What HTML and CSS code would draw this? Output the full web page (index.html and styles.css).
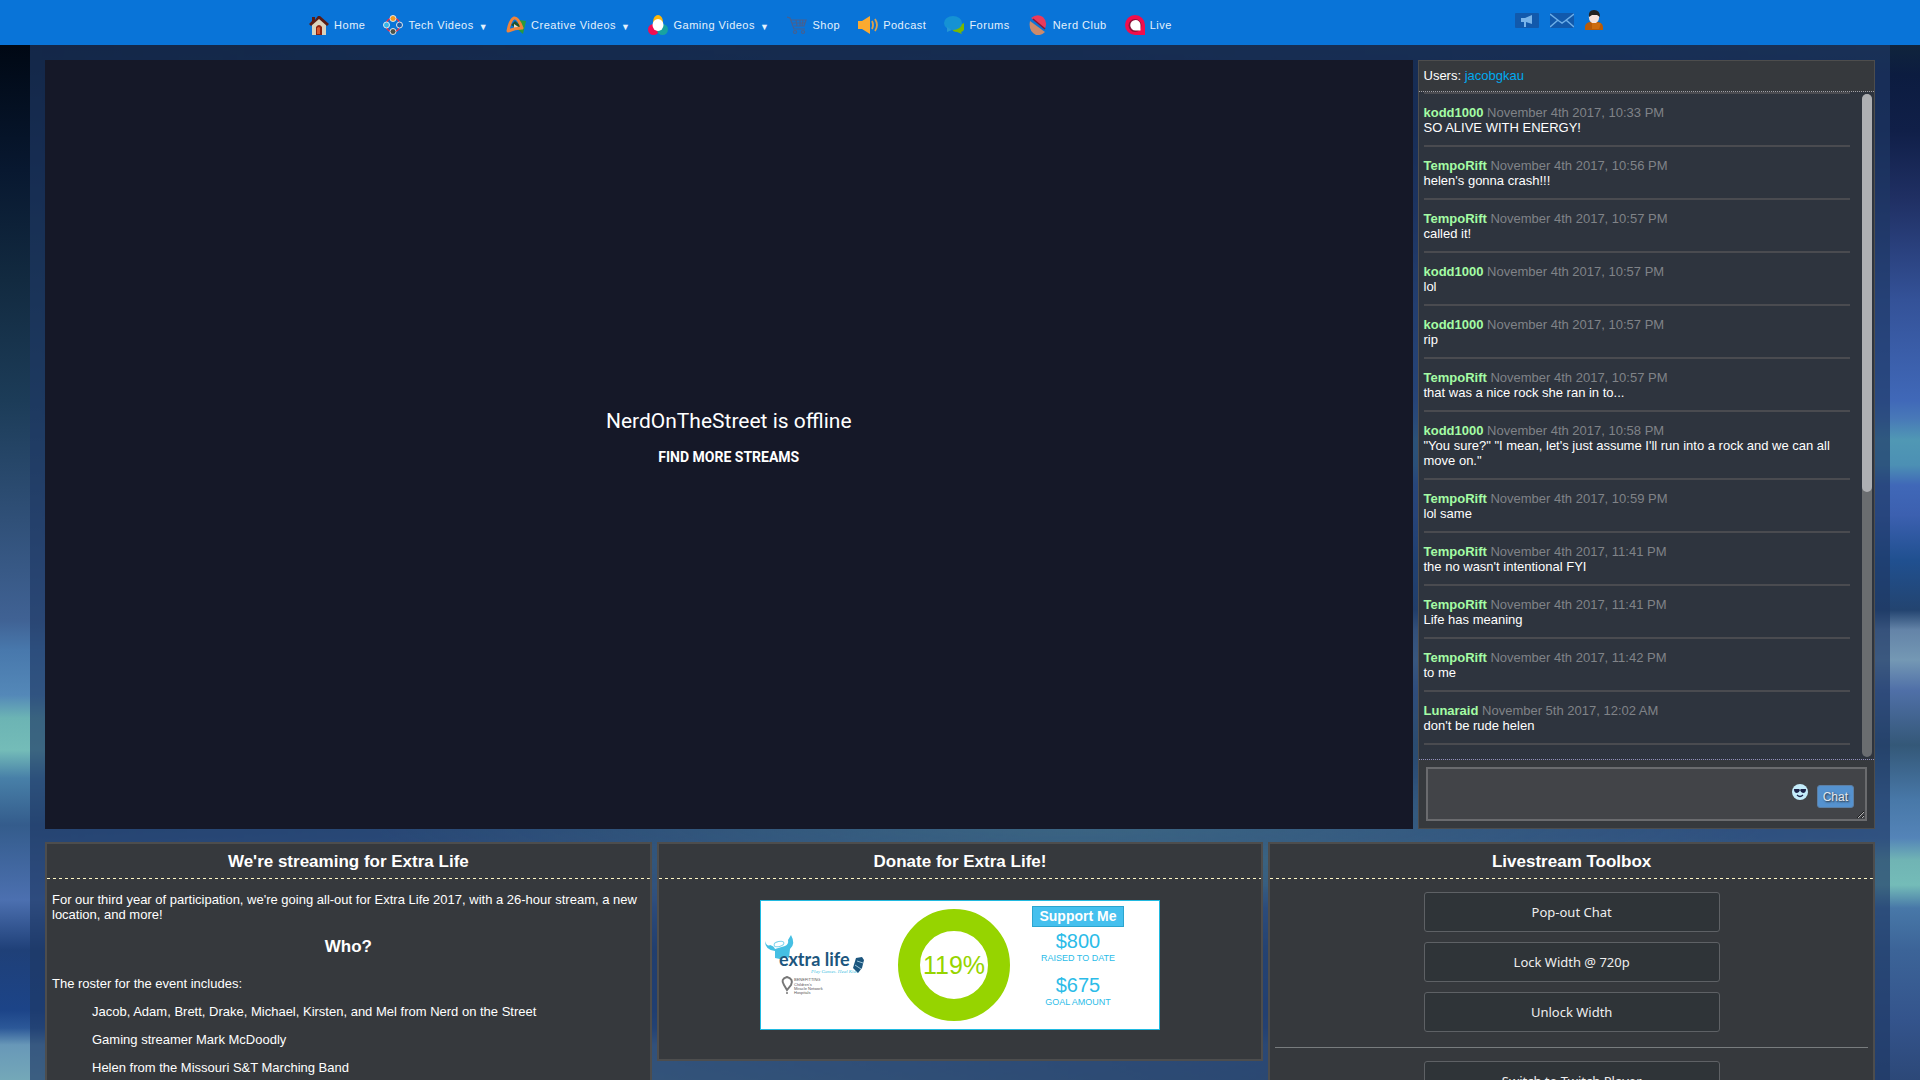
FILE: index.html
```html
<!DOCTYPE html>
<html lang="en">
<head>
<meta charset="utf-8">
<title>NerdOnTheStreet Live</title>
<link rel="stylesheet" href="styles.css">
</head>
<body>
<header class="topbar">
  <nav class="menu" aria-label="Main">
    <a class="menu-item" href="#">
      <svg class="icon" viewBox="0 0 20 20"><path fill="#d9d3bd" d="M3 9l7-7 7 7v11H3z"/><path fill="#5b1c14" d="M3 2h3v3L9 1h2l9 8-2 2-8-7-8 7-2-2 3-3z"/><path fill="#8c2010" d="M7 20v-8q3-4 6 0v8z"/><path fill="#d65a30" d="M8 19v-6q2-2 3 0v6z"/></svg>
      Home</a>
    <a class="menu-item" href="#">
      <svg class="icon" viewBox="0 0 20 20"><circle cx="10" cy="10" r="7" fill="none" stroke="#e2304c" stroke-width="1.5"/><g stroke="#dfe5ea"><circle cx="10" cy="3.500" r="3" fill="#f39a1e"/><circle cx="3.500" cy="10" r="3" fill="#36b5ea"/><circle cx="16.500" cy="10" r="3" fill="#1a5fae"/><circle cx="10" cy="16.500" r="3" fill="#4a5248"/></g></svg>
      Tech Videos <span class="caret">▼</span></a>
    <a class="menu-item" href="#">
      <svg class="icon" viewBox="0 0 20 20"><path fill="#2a9a3c" d="M13 5l7 1-3 13-7-6z"/><path fill="#1d5130" d="M5 10l4-4 6 5-3 3z"/><path fill="#e4ddc8" d="M8 9l6 4-6 2z"/><path d="M2 16q2-11 6-13 4-1 8 10-7 0-14 3z" fill="none" stroke="#f0843c" stroke-width="3" stroke-linejoin="round"/></svg>
      Creative Videos <span class="caret">▼</span></a>
    <a class="menu-item" href="#">
      <svg class="icon" viewBox="0 0 20 20"><ellipse cx="10" cy="7" rx="5" ry="7" fill="#ffb70a"/><circle cx="5.500" cy="14.500" r="5.500" fill="#f20d52"/><circle cx="14.500" cy="14.500" r="5.500" fill="#18a3a0"/><ellipse cx="10" cy="10" rx="5.500" ry="6" fill="#fff"/></svg>
      Gaming Videos <span class="caret">▼</span></a>
    <a class="menu-item" href="#">
      <svg class="icon" viewBox="0 0 20 20" fill="none" stroke="#48608f" stroke-width="1.200"><path d="M0 2l3 1 4 11h11M4 5h15l-2 6H7M5 8h13M9 5l1 6M13 5v6M16 5l-1 6"/><circle cx="8" cy="17" r="1.500"/><circle cx="16" cy="17" r="1.500"/></svg>
      Shop</a>
    <a class="menu-item" href="#">
      <svg class="icon" viewBox="0 0 20 20"><path fill="#fbaa30" d="M0 6h4l8-5v18l-8-5H0z"/><path d="M14 6q2 4 0 8M17 4q4 6 0 12" fill="none" stroke="#dfa24c" stroke-width="1.800"/></svg>
      Podcast</a>
    <a class="menu-item" href="#">
      <svg class="icon" viewBox="0 0 20 20"><path fill="#7ab800" d="M20 8q2 8-3 9l1 2-5-2q-4 0-5-3z"/><ellipse cx="9" cy="8" rx="9" ry="7" fill="#1592d4"/><path fill="#2496d4" d="M3 12l0 5 5-2z"/></svg>
      Forums</a>
    <a class="menu-item" href="#">
      <svg class="icon" viewBox="0 0 20 20"><path fill="#cd8a6b" d="M2 6l15 11q-4 4-9 3-8-4-6-14z"/><path fill="#ea3a5c" d="M3 3q6-5 12-1 5 5 2 11z"/><path d="M5 4l12 10" stroke="#861535" stroke-width="1.500"/></svg>
      Nerd Club</a>
    <a class="menu-item" href="#">
      <svg class="icon" viewBox="0 0 20 20"><path fill="#f20d4c" d="M10 0a10 10 0 0 1 10 10v10H10a10 10 0 0 1 0-20z"/><circle cx="10" cy="10.500" r="6.500" fill="#8c1238"/><path fill="#fff" d="M10.500 5a5 5 0 0 1 5 5v5.500h-5a5 5 0 0 1 0-10.500z"/></svg>
      Live</a>
  </nav>
  <div class="account">
    <a class="account-link" href="#" aria-label="Announcements"><svg width="24" height="15" viewBox="0 0 24 15"><rect width="24" height="15" rx="1" fill="#1159ac"/><path fill="#78b4ea" d="M6 5h4l7-3v9l-6-2v5H9V9H6z"/></svg></a>
    <a class="account-link" href="#" aria-label="Messages"><svg width="24" height="15" viewBox="0 0 24 15"><rect width="24" height="15" rx="1" fill="#1159ac"/><path d="M0 1l9 7 3 2 3-2 9-7M0 14l8-7M24 14l-8-7" fill="none" stroke="#6caee8" stroke-width="1.500"/></svg></a>
    <a class="account-link" href="#" aria-label="Profile"><svg width="18" height="20" viewBox="0 0 18 20"><path fill="#b85a08" d="M0 20q-1-7 5-8h8q6 1 5 8z"/><path fill="#e07c18" d="M7 13h9l-2 6H7z" opacity=".5"/><path fill="#f6e2dc" d="M4 5h10q1 5-3 8h-4q-4-3-3-8z"/><path fill="#222" d="M4 7Q3 0 9 0t6 7l-3-2H7z"/></svg></a>
  </div>
</header>

<main class="page">
  <div class="stage">
    <section class="player" aria-label="Stream">
      <p class="player-status">NerdOnTheStreet is offline</p>
      <a class="player-more" href="#">FIND MORE STREAMS</a>
    </section>

    <section class="chat" aria-label="Chat">
      <div class="chat-users">Users: <a href="#">jacobgkau</a></div>
      <div class="chat-body">
        <div class="chat-log">
          <div class="message"><b>kodd1000</b> <time>November 4th 2017, 10:33 PM</time><p>SO ALIVE WITH ENERGY!</p></div>
          <div class="message"><b>TempoRift</b> <time>November 4th 2017, 10:56 PM</time><p>helen's gonna crash!!!</p></div>
          <div class="message"><b>TempoRift</b> <time>November 4th 2017, 10:57 PM</time><p>called it!</p></div>
          <div class="message"><b>kodd1000</b> <time>November 4th 2017, 10:57 PM</time><p>lol</p></div>
          <div class="message"><b>kodd1000</b> <time>November 4th 2017, 10:57 PM</time><p>rip</p></div>
          <div class="message"><b>TempoRift</b> <time>November 4th 2017, 10:57 PM</time><p>that was a nice rock she ran in to...</p></div>
          <div class="message"><b>kodd1000</b> <time>November 4th 2017, 10:58 PM</time><p>"You sure?" "I mean, let's just assume I'll run into a rock and we can all move on."</p></div>
          <div class="message"><b>TempoRift</b> <time>November 4th 2017, 10:59 PM</time><p>lol same</p></div>
          <div class="message"><b>TempoRift</b> <time>November 4th 2017, 11:41 PM</time><p>the no wasn't intentional FYI</p></div>
          <div class="message"><b>TempoRift</b> <time>November 4th 2017, 11:41 PM</time><p>Life has meaning</p></div>
          <div class="message"><b>TempoRift</b> <time>November 4th 2017, 11:42 PM</time><p>to me</p></div>
          <div class="message"><b>Lunaraid</b> <time>November 5th 2017, 12:02 AM</time><p>don't be rude helen</p></div>
          <div class="message"><b>dragonchild17</b> <time>November 5th 2017, 12:03 AM</time></div>
        </div>
        <div class="scroll-track"><div class="scroll-thumb"></div></div>
      </div>
      <form class="chat-form">
        <textarea class="chat-input" aria-label="Message"></textarea>
        <div class="chat-actions">
          <button class="emoji" type="button" aria-label="Insert emoji"><svg width="16" height="16" viewBox="0 0 16 16"><circle cx="8" cy="8" r="8" fill="#c4ecfa"/><path fill="#1c2348" d="M2 5h5l1 1 1-1h5q0 4-3 4-2 0-3-3-1 3-3 3-3 0-3-4z"/><path d="M5 11q3 3 6 0" fill="none" stroke="#1c2348" stroke-width="1.200"/></svg></button>
          <button class="send" type="submit">Chat</button>
        </div>
      </form>
    </section>
  </div>

  <div class="panels">
    <section class="panel">
      <h2 class="panel-title">We're streaming for Extra Life</h2>
      <div class="panel-text">
        <p>For our third year of participation, we're going all-out for Extra Life 2017, with a 26-hour stream, a new location, and more!</p>
        <h3>Who?</h3>
        <p>The roster for the event includes:</p>
        <ul class="roster">
          <li>Jacob, Adam, Brett, Drake, Michael, Kirsten, and Mel from Nerd on the Street</li>
          <li>Gaming streamer Mark McDoodly</li>
          <li>Helen from the Missouri S&amp;T Marching Band</li>
        </ul>
      </div>
    </section>

    <section class="panel">
      <h2 class="panel-title">Donate for Extra Life!</h2>
      <div class="widget">
        <svg class="charity" viewBox="0 0 110 70" role="img" aria-label="Extra Life">
          <path fill="#45bfe3" d="M0 11q2 6 5 4 4 1 5 4l10-3q4-2 3-6l3-5q5 9-1 14l-1 9q-6-3-9 1l-5-1v-7Q0 20 0 11z"/>
          <ellipse cx="14" cy="14" rx="5" ry="2.500" fill="#fff" stroke="#7bd2ec" transform="rotate(-15 14 14)"/>
          <text class="logo-word" x="14" y="36">extra life</text>
          <text class="logo-tag" x="46" y="43">Play Games. Heal Kids</text>
          <path fill="#1c567e" d="M91 28l6-1 2 3-2 8-4 5-5-5z"/><path d="M90 35l6 4M92 31l6 2" stroke="#9ac3d8"/>
          <path d="M22 60l-3-5q-4-6 3-8 7 2 4 8z" fill="none" stroke="#777" stroke-width="2"/><circle cx="22" cy="63" r="1" fill="#777"/>
          <g class="logo-small"><text x="29" y="51">BENEFITTING</text><text x="29" y="56">Children's</text><text x="29" y="60">Miracle Network</text><text x="29" y="64">Hospitals</text></g>
        </svg>
        <div class="ring">119%</div>
        <div class="totals">
          <a class="support" href="#">Support Me</a>
          <strong>$800</strong><span>RAISED TO DATE</span>
          <strong>$675</strong><span>GOAL AMOUNT</span>
        </div>
      </div>
    </section>

    <section class="panel">
      <h2 class="panel-title">Livestream Toolbox</h2>
      <div class="toolbox">
        <button class="tool" type="button">Pop-out Chat</button>
        <button class="tool" type="button">Lock Width @ 720p</button>
        <button class="tool" type="button">Unlock Width</button>
        <hr>
        <button class="tool" type="button">Switch to Twitch Player</button>
      </div>
    </section>
  </div>
</main>
</body>
</html>
```
FILE: styles.css
```css
* { box-sizing: border-box; }

html { height: 100%; }

body {
  position: relative;
  height: 100vh;
  margin: 0;
  overflow: hidden;
  color: #fff;
  font: 13px/15px "Liberation Sans", Arial, sans-serif;
  background: linear-gradient(#000814 45px, #081830 170px, #122a40 280px, #1c3c58 400px, #305078 520px, #406294 620px, #4878ac 650px, #5488b8 695px, #6cb4b4 718px, #74bcb8 750px, #4880a8 778px, #345c8c 825px, #4c70b0 900px, #1f4078 950px, #1c4488 1010px, #2c5898 1028px, #6898b8 1045px, #74a8b8 1080px);
}

body::before {
  content: "";
  position: absolute;
  inset: 0;
  z-index: -1;
  background: linear-gradient(#10243c 45px, #0c1c40 75px, #101f48 130px, #203064 200px, #345298 300px, #4068b8 400px, #4878b8 418px, #5098b4 440px, #4c90b4 465px, #4068b8 485px, #3c60b0 515px, #205090 560px, #234470 610px, #6484a8 630px, #7498b4 660px, #5070a8 690px, #345878 745px, #4878a8 800px, #5484b8 838px, #70b4b4 860px, #74bcb8 885px, #4878a8 908px, #3c6498 950px, #34548c 1020px, #2c4878 1080px);
  -webkit-mask-image: linear-gradient(to right, transparent 2%, #000 98%);
  mask-image: linear-gradient(to right, transparent 2%, #000 98%);
}

a { color: inherit; text-decoration: none; }
p, h2, h3, ul { margin: 0; padding: 0; }
svg { display: block; }

/* Top bar */
.topbar {
  display: flex;
  justify-content: space-between;
  height: 45px;
  padding: 0 16.5% 0 16.1%;
  background: #0974d8;
}
.menu { display: flex; align-items: center; gap: 18px; padding-top: 5px; }
.menu-item {
  display: flex;
  align-items: center;
  gap: 5px;
  color: #e4f1fc;
  font-size: 11px;
  letter-spacing: 0.5px;
  white-space: nowrap;
}
.icon { width: 20px; height: 20px; }
.caret { padding-top: 3px; font-size: 9px; line-height: 12px; }
.account { display: flex; gap: 11px; padding-top: 10px; }
.account-link { display: flex; align-items: center; height: 20px; }

/* Page frame */
.page {
  margin: 0 30px;
  padding: 15px;
  background:
    radial-gradient(ellipse 700px 70px at 56% 780px, rgba(96, 160, 150, 0.3), transparent),
    rgba(30, 56, 100, 0.66);
  min-height: calc(100vh - 45px);
}
.stage {
  display: grid;
  grid-template-columns: minmax(0, 1fr) 25%;
  gap: 5px;
}
.player {
  display: flex;
  flex-direction: column;
  align-items: center;
  justify-content: center;
  gap: 16px;
  padding-bottom: 16px;
  aspect-ratio: 16 / 9;
  background: #151828;
  font-family: Roboto, sans-serif;
}
.player-status { font-size: 21px; line-height: 24px; }
.player-more { font-size: 14px; font-weight: 700; line-height: 16px; }

/* Chat */
.chat {
  display: flex;
  flex-direction: column;
  height: 100%;
  min-height: 0;
  border: 1px solid #4d4d4d;
  background: #36393d;
}
.chat-users {
  height: 31px;
  padding: 7px 5px;
  border-bottom: 1px dotted #a0a0a8;
}
.chat-users a { color: #00aaf0; }
.chat-body {
  display: flex;
  flex: 1 1 0;
  justify-content: space-between;
  min-height: 0;
  overflow: hidden;
  background: #2e343e;
}
.chat-log { flex: 1; min-width: 0; padding-left: 5px; }
.message {
  padding: 11px 0 10px;
  border-top: 2px solid #4a4b50;
}
.message b { color: #a4fca4; }
.message time { color: #808388; }
.scroll-track {
  width: 10px;
  margin: 2px 2px 2px 12px;
  border-radius: 5px;
  background: #6a6d70;
}
.scroll-thumb { height: 60%; border-radius: 5px; background: #adafb3; }
.chat-form {
  position: relative;
  padding: 7px;
  border-top: 1px dotted #9090c0;
}
.chat-input {
  display: block;
  width: 100%;
  height: 54px;
  padding: 4px;
  border: 2px solid #6a6b6e;
  background: #424448;
  color: #fff;
  font: inherit;
}
.chat-actions {
  position: absolute;
  top: 24px;
  right: 20px;
  display: flex;
  gap: 9px;
}
.emoji { width: 16px; height: 16px; padding: 0; border: 0; background: none; }
.send {
  height: 23px;
  margin-top: 1px;
  padding: 0 5px;
  border: 1px solid #5b7fa5;
  border-radius: 3px;
  background: #5592cf;
  color: #e4e8ee;
  font: 12px/20px "Liberation Sans", Arial, sans-serif;
  text-shadow: 1px 1px 2px #222;
}

/* Lower panels */
.panels {
  display: grid;
  grid-template-columns: repeat(3, minmax(0, 1fr));
  align-items: start;
  gap: 5px;
  margin-top: 13px;
}
.panel { border: 2px solid #4d4d4d; background: #36393d; }
.panel-title {
  height: 35px;
  padding: 8px 0 7px;
  background: repeating-linear-gradient(to right, #fff6c4 0 3px, transparent 3px 6px) bottom / 100% 1px no-repeat;
  font-size: 17px;
  line-height: 20px;
  text-align: center;
}
.panel-text { padding: 13px 5px; }
.panel-text h3 { padding: 15px 0 19px; font-size: 17px; line-height: 20px; text-align: center; }
.roster { padding-left: 40px; list-style: none; }
.roster li { padding-top: 13px; }

/* Donation widget */
.widget {
  display: flex;
  align-items: center;
  width: 400px;
  height: 130px;
  margin: 21px auto 29px;
  border: 1px solid #20b9e0;
  background: #fff;
}
.charity { width: 110px; height: 70px; margin: 0 23px 0 4px; }
.logo-word { fill: #1c567e; font: 700 18px Lato, "Liberation Sans", sans-serif; }
.logo-tag { fill: #45bfe3; font: italic 5px "Liberation Serif", serif; }
.logo-small { fill: #555; font: 4px "Liberation Sans", Arial, sans-serif; }
.ring {
  display: flex;
  align-items: center;
  justify-content: center;
  width: 112px;
  height: 112px;
  border: 22px solid #96d400;
  border-radius: 50%;
  color: #96d400;
  font-size: 25px;
}
.totals {
  display: flex;
  flex-direction: column;
  align-items: center;
  width: 92px;
  margin-left: 22px;
  padding-bottom: 10px;
  color: #2cbce8;
}
.support {
  width: 92px;
  border: 1px solid #2ba5cf;
  background: #45c0ee;
  color: #fff;
  font: 700 14px/19px "Liberation Sans", Arial, sans-serif;
  text-align: center;
}
.totals strong { padding-top: 4px; font-size: 20px; font-weight: 400; line-height: 20px; }
.totals span { padding-bottom: 5px; font-size: 9px; line-height: 15px; white-space: nowrap; }

/* Toolbox */
.toolbox {
  display: flex;
  flex-direction: column;
  align-items: center;
  gap: 10px;
  padding: 13px 5px;
}
.tool {
  width: 50%;
  height: 40px;
  border: 1px solid #5e6165;
  border-radius: 3px;
  background: #2f3438;
  color: #eee;
  font: 13px/18px "Noto Sans", sans-serif;
}
.toolbox hr { width: 100%; height: 1px; margin: 5px 0 3px; border: 0; background: #787c7e; }
```
